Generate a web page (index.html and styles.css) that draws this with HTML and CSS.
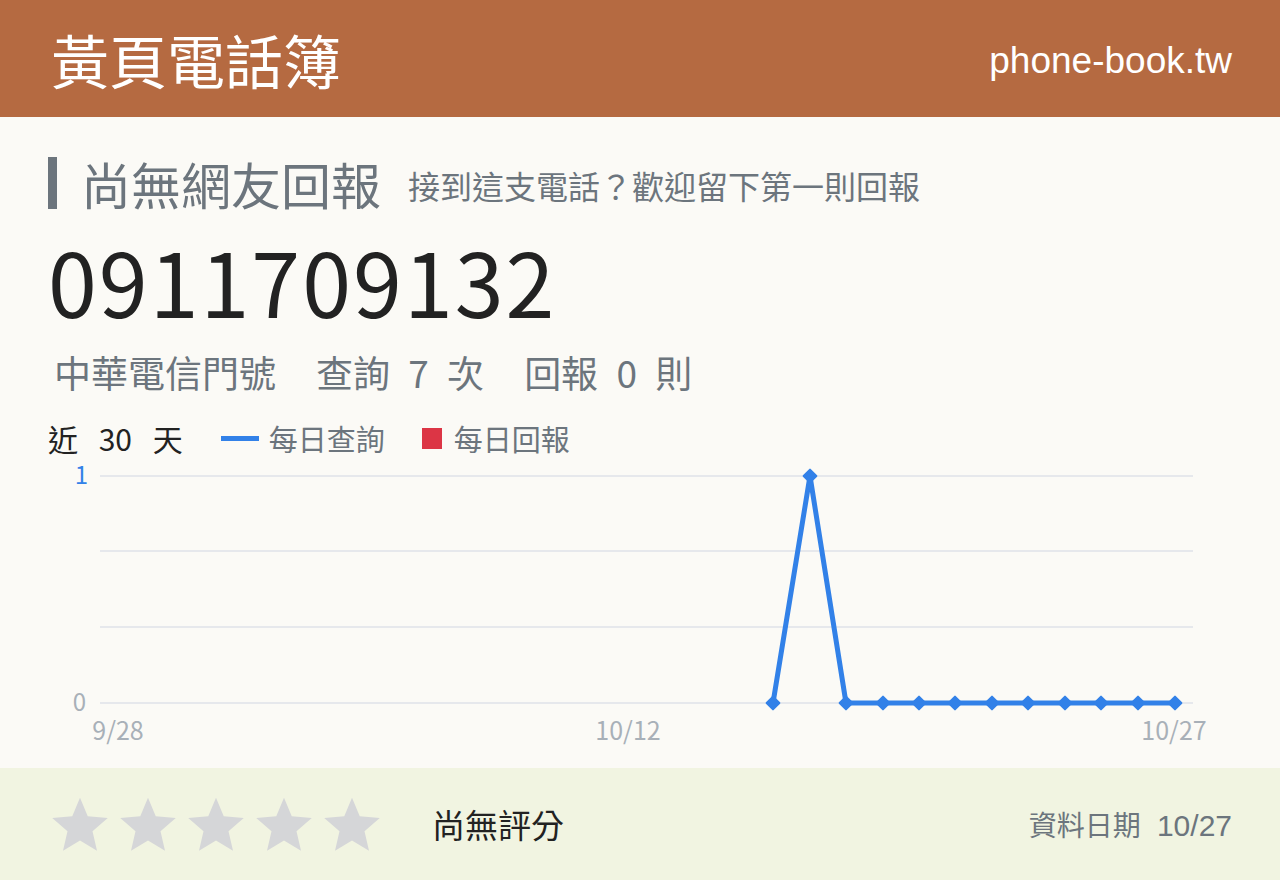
FILE: index.html
```html
<!DOCTYPE html>
<html lang="zh-Hant">
<head>
   <meta charset="UTF-8">
   <meta name="viewport" content="width=device-width, initial-scale=1.0">
   <title>0911709132 - 黃頁電話簿</title>
   <link rel="stylesheet" href="styles.css">
</head>
<body>
   <header class="site-header">
      <div class="brand">黃頁電話簿</div>
      <div class="domain">phone-book.tw</div>
   </header>

   <main class="content">
      <div class="report-title">
         <h2>尚無網友回報</h2>
         <span class="hint">接到這支電話？歡迎留下第一則回報</span>
      </div>

      <h1 class="number">0911709132</h1>

      <div class="stats">
         <span>中華電信門號</span>
         <span>查詢 7 次</span>
         <span>回報 0 則</span>
      </div>

      <div class="legend">
         <span class="period">近 30 天</span>
         <span class="key"><i class="swatch line"></i>每日查詢</span>
         <span class="key"><i class="swatch box"></i>每日回報</span>
      </div>

      <svg class="chart" width="1184" height="308" viewBox="0 0 1184 308">
         <g stroke="#e6e8ec" stroke-width="2">
            <line x1="52" y1="16" x2="1145" y2="16"/>
            <line x1="52" y1="91" x2="1145" y2="91"/>
            <line x1="52" y1="167" x2="1145" y2="167"/>
            <line x1="52" y1="243" x2="1145" y2="243"/>
         </g>
         <g class="axis" font-size="24" text-anchor="end">
            <text x="40" y="24" fill="#3281e8">1</text>
            <text x="38" y="251" fill="#a8b0b8">0</text>
         </g>
         <g class="axis" font-size="25" fill="#a8b0b8" text-anchor="middle">
            <text x="70" y="280">9/28</text>
            <text x="580" y="280">10/12</text>
            <text x="1126" y="280">10/27</text>
         </g>
         <polyline fill="none" stroke="#3281e8" stroke-width="5" stroke-linejoin="round"
            points="725,243 762,16 798,243 835,243 871,243 907,243 944,243 980,243 1017,243 1053,243 1090,243 1127,243"/>
         <g fill="#3281e8" stroke="#3281e8" stroke-width="2" stroke-linejoin="round">
            <rect x="-4.5" y="-4.5" width="9" height="9" transform="translate(725 243) rotate(45)"/>
            <rect x="-4.5" y="-4.5" width="9" height="9" transform="translate(762 16) rotate(45)"/>
            <rect x="-4.5" y="-4.5" width="9" height="9" transform="translate(798 243) rotate(45)"/>
            <rect x="-4.5" y="-4.5" width="9" height="9" transform="translate(835 243) rotate(45)"/>
            <rect x="-4.5" y="-4.5" width="9" height="9" transform="translate(871 243) rotate(45)"/>
            <rect x="-4.5" y="-4.5" width="9" height="9" transform="translate(907 243) rotate(45)"/>
            <rect x="-4.5" y="-4.5" width="9" height="9" transform="translate(944 243) rotate(45)"/>
            <rect x="-4.5" y="-4.5" width="9" height="9" transform="translate(980 243) rotate(45)"/>
            <rect x="-4.5" y="-4.5" width="9" height="9" transform="translate(1017 243) rotate(45)"/>
            <rect x="-4.5" y="-4.5" width="9" height="9" transform="translate(1053 243) rotate(45)"/>
            <rect x="-4.5" y="-4.5" width="9" height="9" transform="translate(1090 243) rotate(45)"/>
            <rect x="-4.5" y="-4.5" width="9" height="9" transform="translate(1127 243) rotate(45)"/>
         </g>
      </svg>
   </main>

   <footer class="rating-bar">
      <div class="stars">
         <svg width="60" height="60" viewBox="0 0 24 24"><path d="M12 1.5l3.1 7.4 8 .7-6.1 5.3 1.8 7.8L12 18.6l-6.8 4.1 1.8-7.8L.9 9.6l8-.7z"/></svg>
         <svg width="60" height="60" viewBox="0 0 24 24"><path d="M12 1.5l3.1 7.4 8 .7-6.1 5.3 1.8 7.8L12 18.6l-6.8 4.1 1.8-7.8L.9 9.6l8-.7z"/></svg>
         <svg width="60" height="60" viewBox="0 0 24 24"><path d="M12 1.5l3.1 7.4 8 .7-6.1 5.3 1.8 7.8L12 18.6l-6.8 4.1 1.8-7.8L.9 9.6l8-.7z"/></svg>
         <svg width="60" height="60" viewBox="0 0 24 24"><path d="M12 1.5l3.1 7.4 8 .7-6.1 5.3 1.8 7.8L12 18.6l-6.8 4.1 1.8-7.8L.9 9.6l8-.7z"/></svg>
         <svg width="60" height="60" viewBox="0 0 24 24"><path d="M12 1.5l3.1 7.4 8 .7-6.1 5.3 1.8 7.8L12 18.6l-6.8 4.1 1.8-7.8L.9 9.6l8-.7z"/></svg>
      </div>
      <span class="no-rating">尚無評分</span>
      <span class="updated">資料日期 <b>10/27</b></span>
   </footer>
</body>
</html>
```

FILE: styles.css
```css
body {
   margin: 0;
   padding: 0;
   background-color: #fbfaf6;
   font-family: "Noto Sans CJK TC", "Noto Sans", sans-serif;
   color: #222;
}

.site-header {
   height: 117px;
   background-color: #b56a41;
   color: #fff;
   display: flex;
   align-items: center;
   justify-content: space-between;
   padding: 0 48px 0 51px;
}

.brand {
   font-size: 58px;
   line-height: 1;
}

.domain {
   font-family: "Liberation Sans", Arial, sans-serif;
   font-size: 37px;
   padding-top: 4px;
}

.content {
   padding: 40px 48px 0;
}

.report-title {
   display: flex;
   align-items: center;
   border-left: 9px solid #6c757d;
   height: 52px;
   padding-left: 24px;
}

.report-title h2 {
   margin: 0;
   font-size: 50px;
   font-weight: normal;
   color: #6c757d;
   line-height: 1;
}

.report-title .hint {
   font-size: 32px;
   color: #6c757d;
   margin-left: 27px;
   padding-top: 4px;
}

.number {
   margin: 21px 0 0;
   height: 100px;
   font-size: 88px;
   font-weight: normal;
   line-height: 100px;
   color: #222;
   letter-spacing: 2px;
}

.stats {
   display: flex;
   gap: 40px;
   margin-top: 18px;
   padding-left: 6px;
   height: 48px;
   font-size: 37px;
   line-height: 48px;
   color: #6c757d;
   word-spacing: 10px;
}

.legend {
   display: flex;
   align-items: center;
   margin-top: 24px;
   height: 36px;
   line-height: 36px;
}

.legend .period {
   font-size: 30px;
   color: #222;
   word-spacing: 14px;
   margin-right: 38px;
}

.legend .key {
   display: flex;
   align-items: center;
   font-size: 29px;
   color: #6c757d;
   margin-right: 37px;
}

.swatch {
   display: inline-block;
}

.swatch.line {
   width: 38px;
   height: 5px;
   margin-right: 10px;
   background-color: #3281e8;
}

.swatch.box {
   width: 20px;
   height: 21px;
   margin-right: 12px;
   background-color: #dc3545;
}

.chart {
   display: block;
   margin-top: 4px;
   overflow: visible;
}

.chart .axis {
   font-family: "Noto Sans CJK TC", sans-serif;
}

.rating-bar {
   height: 112px;
   background-color: #f1f4e1;
   display: flex;
   align-items: center;
   padding: 0 48px 0 50px;
}

.stars {
   display: flex;
   gap: 8px;
}

.stars svg {
   fill: #d5d6d8;
}

.no-rating {
   font-size: 33px;
   color: #222;
   margin-left: 50px;
}

.updated {
   margin-left: auto;
   font-size: 28px;
   color: #6c757d;
}

.updated b {
   font-family: "Liberation Sans", Arial, sans-serif;
   font-weight: normal;
   font-size: 30px;
   margin-left: 10px;
}
```
